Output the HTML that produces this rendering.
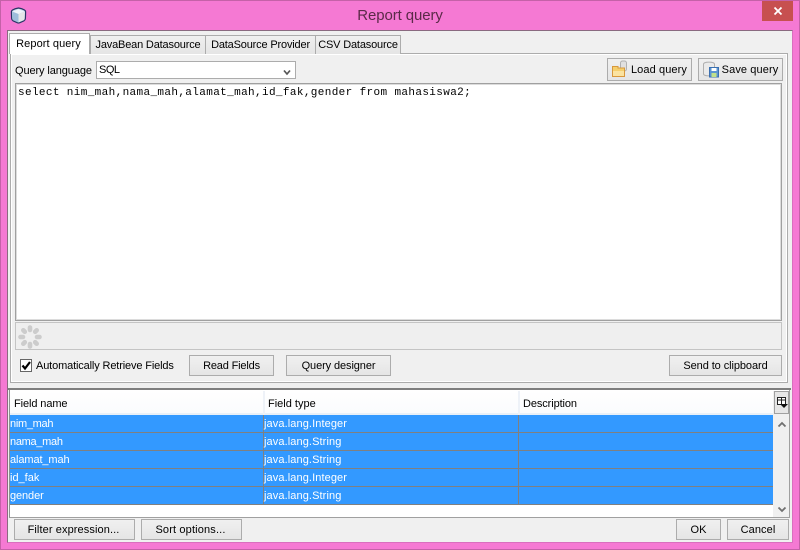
<!DOCTYPE html>
<html><head><meta charset="utf-8"><title>Report query</title>
<style>
html,body{margin:0;padding:0;width:800px;height:550px;overflow:hidden}
body{position:relative;background:#f579d3;font:11px "Liberation Sans",sans-serif;color:#000}
div,svg{position:absolute;box-sizing:border-box}
.t{white-space:nowrap;line-height:14px;font-size:11px}
.b{border:1px solid #acacac;background:linear-gradient(#f0f0f0,#e5e5e5);text-align:center;white-space:nowrap;line-height:19px;padding-top:1px;font-size:11px;letter-spacing:.1px}
.tab{border:1px solid #acacac;border-bottom:none;background:linear-gradient(#f0f0f0,#e5e5e5);text-align:center;white-space:nowrap;line-height:19px;height:19px;top:35px;letter-spacing:-.17px}
.r{left:10px;width:763px;height:18px;background:#3399ff;border-bottom:1px solid #808080}
.c{top:0;color:#fff;line-height:19px;white-space:nowrap}
.v{top:0;width:1px;height:17px;background:#808080}
</style></head><body>
<div style="left:0;top:0;width:800px;height:550px;border:1px solid #c561a8"></div>
<svg style="left:10px;top:7px" width="17" height="17" viewBox="0 0 17 17">
<path d="M8.5 1 Q12 1.5 14.5 3 Q15.8 3.8 15.6 5.5 L15.4 11.5 Q15.3 13 14 13.8 L9.5 15.8 Q8.5 16.2 7.5 15.8 L3 13.8 Q1.7 13 1.6 11.5 L1.4 5.5 Q1.2 3.8 2.5 3 Q5 1.5 8.5 1Z" fill="#c9dcec" stroke="#2b3566" stroke-width="1.2"/>
<path d="M2.5 4.5 L8.5 7 L14.5 4.5 L8.5 2.2Z" fill="#eef4fa"/>
<path d="M8.5 7 V15.2 L3 13 Q2.4 12.5 2.4 11.5 L2.3 4.8Z" fill="#9dbddb"/>
<path d="M8.5 7 L14.7 4.8 L14.5 11.5 Q14.5 12.5 14 13 L8.5 15.2Z" fill="#e4e6e8"/></svg>
<div style="left:0;top:8px;width:800px;text-align:center;font-size:15px;line-height:16px;color:#5b2a48;letter-spacing:-.1px">Report query</div>
<div style="left:762px;top:1px;width:31px;height:20px;background:#c75050"></div>
<svg style="left:772px;top:6px" width="12" height="10" viewBox="0 0 12 10"><path d="M2.5 1.5 L9.5 8.5 M9.5 1.5 L2.5 8.5" stroke="#fff" stroke-width="1.8"/></svg>

<div style="left:7px;top:30px;width:786px;height:513px;background:#f0f0f0;border:1px solid #8a6a80;border-right-color:#d96fbe;border-bottom-color:#d96fbe"></div>
<div style="left:8px;top:31px;width:784px;height:2px;background:#f0f0f0"></div>

<div style="left:10px;top:53px;width:778px;height:330px;background:#f0f0f0;border:1px solid #acacac;box-shadow:0 0 0 1px #fff inset"></div>
<div style="left:9px;top:33px;width:81px;height:21px;background:#fff;border:1px solid #acacac;border-bottom:none;text-align:center;padding-right:2px;line-height:21px;letter-spacing:.1px;white-space:nowrap">Report query</div>
<div class="tab" style="left:90px;width:116px">JavaBean Datasource</div>
<div class="tab" style="left:205px;width:111px">DataSource Provider</div>
<div class="tab" style="left:315px;width:86px">CSV Datasource</div>

<div class="t" style="left:15px;top:64px;letter-spacing:-.1px">Query language</div>
<div style="left:96px;top:61px;width:200px;height:18px;background:#fff;border:1px solid #acacac;line-height:17px;padding-left:2px;letter-spacing:-.5px">SQL</div>
<svg style="left:283px;top:69px" width="9" height="7" viewBox="0 0 9 7"><path d="M1 1.5 L4 5 L7 1.5" fill="none" stroke="#555" stroke-width="1.7"/></svg>

<div class="b" style="left:607px;top:58px;width:85px;height:23px;line-height:21px;padding-left:19px">Load query</div>
<svg style="left:611px;top:60px" width="18" height="18" viewBox="0 0 18 18">
<rect x="9.5" y="1" width="6" height="10" rx="2" fill="#e0e0e0" stroke="#b0b0b0"/>
<path d="M1.5 6.5H7V8H13.5V16.5H1.5Z" fill="#f5cf6c" stroke="#d8983c"/>
<path d="M2 11H13V16H2Z" fill="#fbe3a0"/></svg>
<div class="b" style="left:698px;top:58px;width:85px;height:23px;line-height:21px;padding-left:19px">Save query</div>
<svg style="left:702px;top:60px" width="18" height="18" viewBox="0 0 18 18">
<path d="M1.5 4C1.5 1.5 12.5 1.5 12.5 4V14C12.5 16.5 1.5 16.5 1.5 14Z" fill="#eaeaea" stroke="#b0b0b0"/>
<rect x="7.5" y="7.5" width="9" height="9.5" fill="#5a94d2" stroke="#3a6fb0"/>
<rect x="9.5" y="8" width="5" height="3" fill="#fff"/>
<rect x="9.5" y="13" width="5" height="4" fill="#bfe08a"/></svg>

<div style="left:15px;top:83px;width:767px;height:238px;background:#fff;border:1px solid #a0a0a0;box-shadow:inset 0 0 0 1px #dcdcdc"></div>
<div style="left:18px;top:86px;font:11px/15px 'Liberation Mono',monospace;letter-spacing:.37px;white-space:nowrap">select nim_mah,nama_mah,alamat_mah,id_fak,gender from mahasiswa2;</div>

<div style="left:15px;top:322px;width:767px;height:28px;background:#efefef;border:1px solid #c4c4c4"></div>
<svg style="left:17px;top:324px" width="26" height="26" viewBox="0 0 26 26" stroke="#cccccc" stroke-width="4.6" stroke-linecap="round">
<path d="M13 3.5V6M13 20V22.5M3.5 13H6M20 13H22.5M6.3 6.3L7.8 7.8M18.2 18.2L19.7 19.7M19.7 6.3L18.2 7.8M7.8 18.2L6.3 19.7"/></svg>

<div style="left:20px;top:359px;width:12px;height:13px;background:#fff;border:1px solid #666"></div>
<svg style="left:20px;top:359px" width="12" height="13" viewBox="0 0 12 13"><path d="M2.5 6.5 L5 9.5 L10 3" fill="none" stroke="#000" stroke-width="2.2"/></svg>
<div class="t" style="left:36px;top:359px;letter-spacing:-.14px">Automatically Retrieve Fields</div>
<div class="b" style="left:189px;top:355px;width:85px;height:21px;letter-spacing:-.17px">Read Fields</div>
<div class="b" style="left:286px;top:355px;width:105px;height:21px;letter-spacing:-.1px">Query designer</div>
<div class="b" style="left:669px;top:355px;width:113px;height:21px;letter-spacing:-.08px">Send to clipboard</div>

<div style="left:8px;top:384px;width:784px;height:5px;background:#f0f0f0"></div>
<div style="left:8px;top:388px;width:783px;height:2px;background:#7f7f7f"></div>

<div style="left:9px;top:390px;width:781px;height:128px;background:#fff;border-left:1px solid #8f8f8f;border-right:1px solid #a0a0a0;border-bottom:1px solid #a0a0a0"></div>
<div style="left:10px;top:391px;width:763px;height:24px;background:linear-gradient(#fff,#fafbfd);border-bottom:2px solid #e8f0f8"></div>
<div style="left:263px;top:391px;width:2px;height:24px;background:#eef2f8"></div>
<div style="left:518px;top:391px;width:2px;height:24px;background:#eef2f8"></div>
<div class="t" style="left:14px;top:397px;letter-spacing:-.1px">Field name</div>
<div class="t" style="left:268px;top:397px">Field type</div>
<div class="t" style="left:523px;top:397px;letter-spacing:-.1px">Description</div>

<div class="r" style="top:415px"><div class="c" style="left:0;letter-spacing:-.3px">nim_mah</div><div class="v" style="left:253px"></div><div class="c" style="left:254px;letter-spacing:.1px">java.lang.Integer</div><div class="v" style="left:508px"></div></div>
<div class="r" style="top:433px"><div class="c" style="left:0;letter-spacing:-.3px">nama_mah</div><div class="v" style="left:253px"></div><div class="c" style="left:254px;letter-spacing:.1px">java.lang.String</div><div class="v" style="left:508px"></div></div>
<div class="r" style="top:451px"><div class="c" style="left:0;letter-spacing:-.1px">alamat_mah</div><div class="v" style="left:253px"></div><div class="c" style="left:254px;letter-spacing:.1px">java.lang.String</div><div class="v" style="left:508px"></div></div>
<div class="r" style="top:469px"><div class="c" style="left:0">id_fak</div><div class="v" style="left:253px"></div><div class="c" style="left:254px;letter-spacing:.1px">java.lang.Integer</div><div class="v" style="left:508px"></div></div>
<div class="r" style="top:487px"><div class="c" style="left:0;letter-spacing:-.1px">gender</div><div class="v" style="left:253px"></div><div class="c" style="left:254px;letter-spacing:.1px">java.lang.String</div><div class="v" style="left:508px"></div></div>

<div style="left:773px;top:391px;width:16px;height:126px;background:#f0f0f0"></div>
<div style="left:774px;top:391px;width:15px;height:23px;background:#e6e6e6;border:1px solid #a0a0a0"></div>
<svg style="left:776px;top:396px" width="13" height="13" viewBox="0 0 13 13"><path d="M1.5 1.5H9.5V8.5H1.5ZM1.5 4H9.5M5.5 1.5V8.5" fill="#fff" stroke="#222"/><path d="M4 8H12L8 12Z" fill="#111"/></svg>
<svg style="left:777px;top:421px" width="10" height="7" viewBox="0 0 10 7"><path d="M1.5 5.5 L5 2 L8.5 5.5" fill="none" stroke="#707070" stroke-width="1.8"/></svg>
<svg style="left:777px;top:506px" width="10" height="7" viewBox="0 0 10 7"><path d="M1.5 1.5 L5 5 L8.5 1.5" fill="none" stroke="#707070" stroke-width="1.8"/></svg>

<div class="b" style="left:14px;top:519px;width:121px;height:21px;padding-right:2px">Filter expression...</div>
<div class="b" style="left:141px;top:519px;width:101px;height:21px;padding-right:2px;letter-spacing:.15px">Sort options...</div>
<div class="b" style="left:676px;top:519px;width:45px;height:21px">OK</div>
<div class="b" style="left:727px;top:519px;width:62px;height:21px">Cancel</div>
</body></html>
